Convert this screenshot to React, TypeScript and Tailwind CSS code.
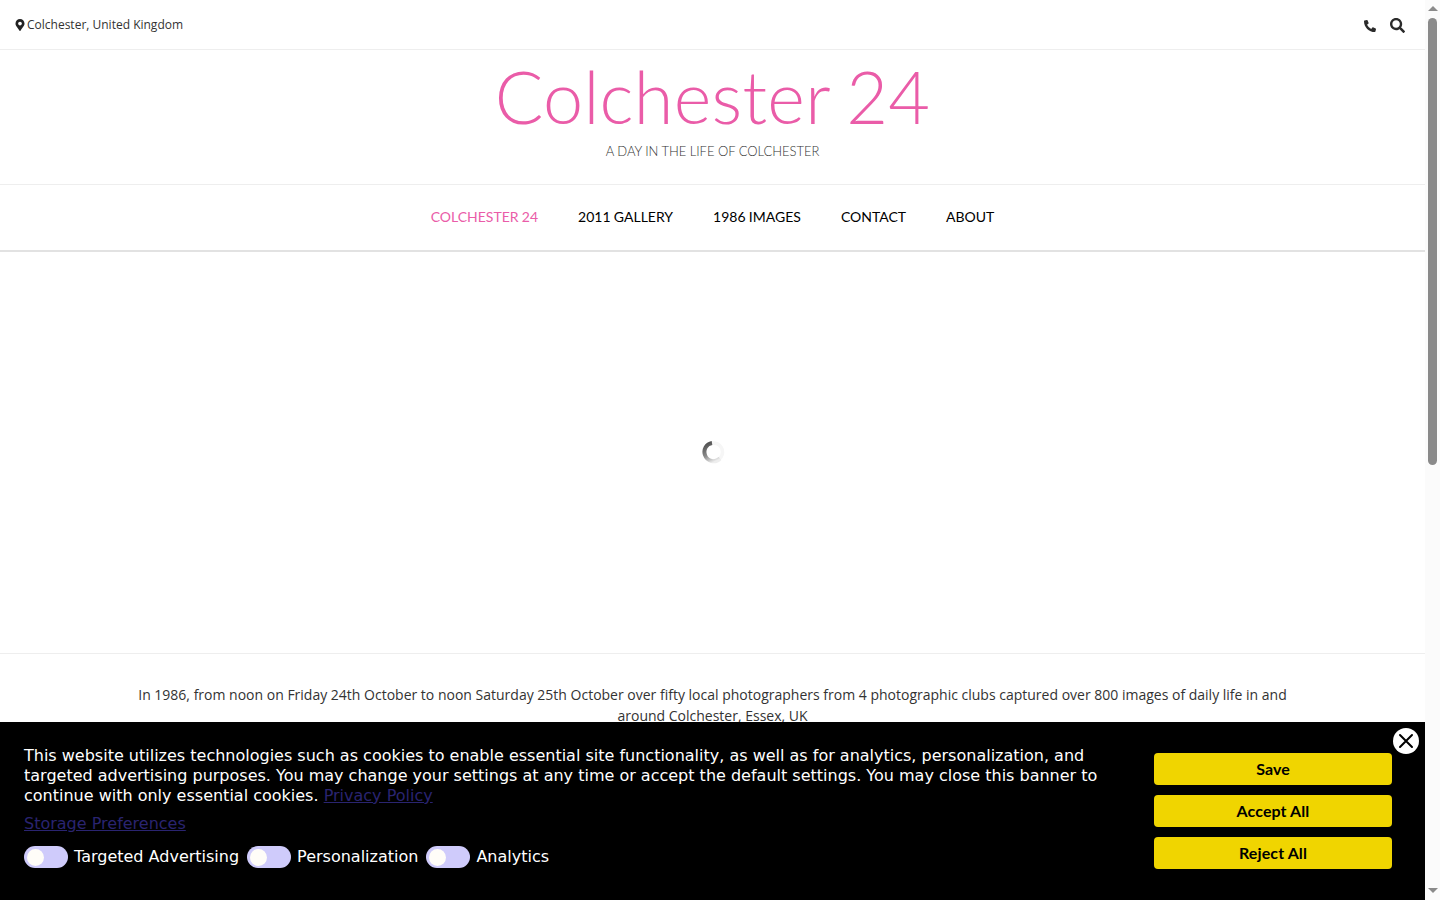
import { FaMapMarkerAlt, FaPhoneAlt, FaSearch } from 'react-icons/fa'

const navLinks = ['COLCHESTER 24', '2011 GALLERY', '1986 IMAGES', 'CONTACT', 'ABOUT']
const consentToggles = ['Targeted Advertising', 'Personalization', 'Analytics']
const bannerButtons = ['Save', 'Accept All', 'Reject All']

function Toggle({ label }: { label: string }) {
  return (
    <div className="flex items-center gap-[6px]">
      <span className="flex h-[22px] w-[44px] items-center rounded-full bg-[#cfcbfb] pl-[3px]">
        <span className="h-[17px] w-[17px] rounded-full bg-[#fffdf8]" />
      </span>
      <span className="text-[16px] leading-[22px] text-white">{label}</span>
    </div>
  )
}

export default function App() {
  return (
    <div className="relative flex h-screen w-full overflow-hidden bg-white font-['Open_Sans',sans-serif]">
      <div className="w-[1425px] shrink-0">
        {/* top bar */}
        <div className="flex h-[50px] items-center justify-between border-b border-[#eeeeee] pl-[14px] pr-[20px]">
          <div className="flex items-center text-[12px] text-[#333333]">
            <FaMapMarkerAlt size={12} className="text-[#222222]" />
            <span className="ml-[1px]">Colchester, United Kingdom</span>
          </div>
          <div className="mt-[2px] flex items-center gap-[14px] text-[#2b2b2b]">
            <FaPhoneAlt size={12} />
            <FaSearch size={15} />
          </div>
        </div>

        {/* logo */}
        <div className="flex h-[135px] flex-col items-center border-b border-[#eeeeee] font-['Lato',sans-serif]">
          <h1 className="mt-[6px] text-[72px] font-light leading-[80px] tracking-[0.3px] text-[#ea5ca8] [word-spacing:-3px]">
            Colchester 24
          </h1>
          <p className="mt-[7px] text-[13px] font-light leading-[16px] tracking-[-0.04px] text-[#333333]">
            A DAY IN THE LIFE OF COLCHESTER
          </p>
        </div>

        {/* nav */}
        <nav className="flex h-[67px] items-center justify-center gap-[40px] border-b-2 border-[#e2e2e2] pb-[2px] font-['Lato',sans-serif] text-[14px] [word-spacing:-0.3px]">
          {navLinks.map((link, i) => (
            <a key={link} className={i === 0 ? 'text-[#ea5ca8]' : 'text-black'}>
              {link}
            </a>
          ))}
        </nav>

        {/* slideshow placeholder */}
        <div className="flex h-[402px] items-center justify-center border-b border-[#eeeeee] pb-[2px]">
          <svg width="24" height="24" viewBox="0 0 24 24" fill="none">
            <defs>
              <linearGradient id="spin" x1="0.3" y1="0" x2="0.7" y2="1">
                <stop offset="0" stopColor="#555555" />
                <stop offset="0.55" stopColor="#8c8c8c" />
                <stop offset="1" stopColor="#eeeeee" />
              </linearGradient>
            </defs>
            <circle cx="12.5" cy="12" r="9" stroke="#f6f6f6" strokeWidth="3.5" />
            <path d="M11 3 A9 9 0 0 0 4 15 A9 9 0 0 0 19 18.5" stroke="url(#spin)" strokeWidth="4" />
          </svg>
        </div>

        <p className="mx-auto mt-[30px] w-[1160px] text-center text-[14px] leading-[21px] text-[#333333]">
          In 1986, from noon on Friday 24th October to noon Saturday 25th October over fifty local photographers from 4
          photographic clubs captured over 800 images of daily life in and around Colchester, Essex, UK
        </p>
      </div>

      {/* scrollbar */}
      <div className="flex w-[15px] shrink-0 flex-col items-center bg-[#fbfbfb]">
        <div className="mt-[6px] h-0 w-0 border-x-[5px] border-b-[5px] border-x-transparent border-b-[#8a8a8a]" />
        <div className="mt-[7px] h-[447px] w-[9px] rounded-[5px] bg-[#8a8a8a]" />
        <div className="mt-auto mb-[7px] h-0 w-0 border-x-[5px] border-t-[5px] border-x-transparent border-t-[#8a8a8a]" />
      </div>

      {/* cookie banner */}
      <div className="absolute bottom-0 left-0 flex h-[178px] w-[1425px] bg-black font-['DejaVu_Sans',sans-serif]">
        <div className="w-[1154px] pl-[24px] pt-[24px]">
          <p className="w-[1090px] text-[16px] leading-[20px] text-white">
            This website utilizes technologies such as cookies to enable essential site functionality, as well as for
            analytics, personalization, and targeted advertising purposes. You may change your settings at any time or
            accept the default settings. You may close this banner to continue with only essential cookies.{' '}
            <a className="text-[#2a2470] underline">Privacy Policy</a>
          </p>
          <a className="mt-[8px] block text-[16px] leading-[20px] text-[#2a2470] underline">Storage Preferences</a>
          <div className="mt-[12px] flex gap-[8px]">
            {consentToggles.map(label => (
              <Toggle key={label} label={label} />
            ))}
          </div>
        </div>
        <div className="flex w-[238px] flex-col gap-[10px] pt-[31px]">
          {bannerButtons.map(label => (
            <button
              key={label}
              className="h-[32px] rounded-[4px] bg-[#f0d500] font-['Lato',sans-serif] text-[16px] font-bold tracking-[0.1px] text-black"
            >
              {label}
            </button>
          ))}
        </div>
        <button className="absolute right-[6px] top-[6px] flex h-[26px] w-[26px] items-center justify-center rounded-full bg-white">
          <svg width="18" height="18" viewBox="0 0 18 18" stroke="black" strokeWidth="2" strokeLinecap="round">
            <path d="M3 3 L15 15 M15 3 L3 15" />
          </svg>
        </button>
      </div>
    </div>
  )
}
